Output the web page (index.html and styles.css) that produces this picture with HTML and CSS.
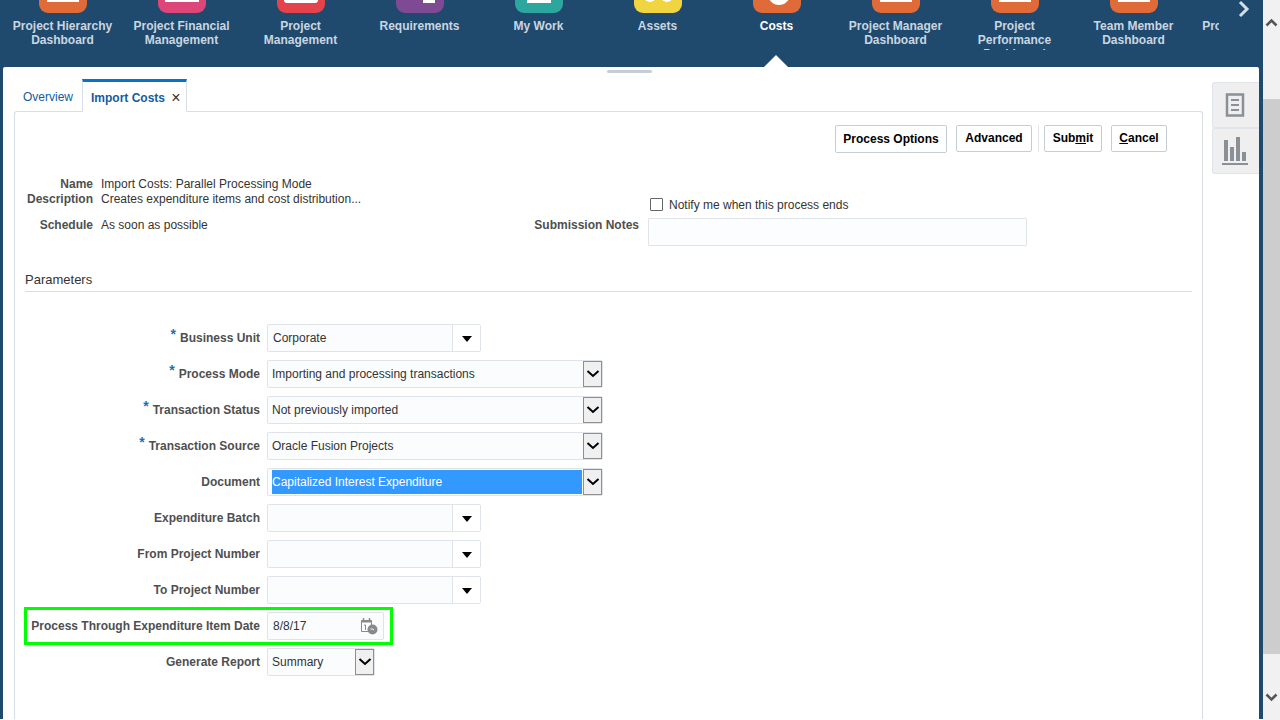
FILE: index.html
```html
<!DOCTYPE html>
<html lang="en">
<head>
  <meta charset="UTF-8">
  <title>Import Costs</title>
  <link rel="stylesheet" href="styles.css">
</head>
<body>
  <div class="app">
    <div class="nav">
      <div class="nav-items">
        <div class="nav-item"><div class="tile orange"><span class="peek peek-hier"></span></div><div class="nav-label">Project Hierarchy Dashboard</div></div>
        <div class="nav-item"><div class="tile pink"><span class="peek peek-fin"></span></div><div class="nav-label">Project Financial Management</div></div>
        <div class="nav-item"><div class="tile red"><span class="peek peek-mgmt"></span></div><div class="nav-label">Project Management</div></div>
        <div class="nav-item"><div class="tile purple"><span class="peek peek-req"></span></div><div class="nav-label">Requirements</div></div>
        <div class="nav-item"><div class="tile teal"><span class="peek peek-work"></span></div><div class="nav-label">My Work</div></div>
        <div class="nav-item"><div class="tile yellow"><span class="peek peek-dot1"></span><span class="peek peek-dot2"></span></div><div class="nav-label">Assets</div></div>
        <div class="nav-item active"><div class="tile orange"><span class="peek peek-coin"></span></div><div class="nav-label">Costs</div></div>
        <div class="nav-item"><div class="tile orange"><span class="peek peek-hier"></span></div><div class="nav-label">Project Manager Dashboard</div></div>
        <div class="nav-item"><div class="tile orange"><span class="peek peek-hier"></span></div><div class="nav-label">Project Performance Dashboard</div></div>
        <div class="nav-item"><div class="tile orange"><span class="peek peek-hier"></span></div><div class="nav-label">Team Member Dashboard</div></div>
        <div class="nav-item"><div class="tile orange"><span class="peek peek-hier"></span></div><div class="nav-label">Project Reporting</div></div>
      </div>
      <svg class="nav-next" width="14" height="18" viewBox="0 0 14 18"><path d="M3 2l7 7-7 7" fill="none" stroke="#d5dde5" stroke-width="3"/></svg>
      <div class="nav-pointer"></div>
    </div>

    <div class="panel">
      <div class="sash"></div>
      <div class="panel-main">
        <div class="tabs">
          <a class="tab">Overview</a>
          <a class="tab tab-on">Import Costs <span class="tab-close">×</span></a>
        </div>
        <div class="content">
          <div class="toolbar">
            <button class="btn btn-options">Process Options</button>
            <button class="btn btn-advanced">Advanced</button>
            <span class="tool-sep"></span>
            <button class="btn btn-submit">Sub<u>m</u>it</button>
            <button class="btn btn-cancel"><u>C</u>ancel</button>
          </div>

          <div class="summary">
            <div class="summary-left">
              <div class="info"><span class="info-label">Name</span><span>Import Costs: Parallel Processing Mode</span></div>
              <div class="info"><span class="info-label">Description</span><span>Creates expenditure items and cost distribution...</span></div>
              <div class="info info-gap"><span class="info-label">Schedule</span><span>As soon as possible</span></div>
            </div>
            <div class="summary-right">
              <label class="notify"><span class="check"></span><span class="notify-text">Notify me when this process ends</span></label>
              <div class="notes"><span class="notes-label">Submission Notes</span><div class="notes-box"></div></div>
            </div>
          </div>

          <h3 class="section">Parameters</h3>

          <div class="params">
            <div class="row"><label class="req">Business Unit</label><div class="field combo">Corporate<span class="combo-btn"><i class="down"></i></span></div></div>
            <div class="row"><label class="req">Process Mode</label><div class="field sel">Importing and processing transactions<span class="sel-btn"><svg width="14" height="8" viewBox="0 0 14 8"><path d="M1.500 1l5.500 5 5.500-5" fill="none" stroke="#000" stroke-width="2"/></svg></span></div></div>
            <div class="row"><label class="req">Transaction Status</label><div class="field sel">Not previously imported<span class="sel-btn"><svg width="14" height="8" viewBox="0 0 14 8"><path d="M1.500 1l5.500 5 5.500-5" fill="none" stroke="#000" stroke-width="2"/></svg></span></div></div>
            <div class="row"><label class="req">Transaction Source</label><div class="field sel">Oracle Fusion Projects<span class="sel-btn"><svg width="14" height="8" viewBox="0 0 14 8"><path d="M1.500 1l5.500 5 5.500-5" fill="none" stroke="#000" stroke-width="2"/></svg></span></div></div>
            <div class="row"><label>Document</label><div class="field sel"><span class="picked">Capitalized Interest Expenditure</span><span class="sel-btn"><svg width="14" height="8" viewBox="0 0 14 8"><path d="M1.500 1l5.500 5 5.500-5" fill="none" stroke="#000" stroke-width="2"/></svg></span></div></div>
            <div class="row"><label>Expenditure Batch</label><div class="field combo"><span class="combo-btn"><i class="down"></i></span></div></div>
            <div class="row"><label>From Project Number</label><div class="field combo"><span class="combo-btn"><i class="down"></i></span></div></div>
            <div class="row"><label>To Project Number</label><div class="field combo"><span class="combo-btn"><i class="down"></i></span></div></div>
            <div class="row"><label>Process Through Expenditure Item Date</label><div class="field date">8/8/17
              <svg class="cal" width="18" height="18" viewBox="0 0 18 18"><path d="M1.500 3.500h10v11h-10z" fill="#fff" stroke="#8a8a8a"/><path d="M1.500 3.500h10v2h-10z" fill="#8a8a8a"/><path d="M3.500 1v3M9.500 1v3" stroke="#8a8a8a" stroke-width="1.500"/><path d="M4 8h1.500v5" fill="none" stroke="#8a8a8a"/><circle cx="12.500" cy="12.500" r="5" fill="#8a8a8a"/><path d="M10.500 12h2l1.500 1" fill="none" stroke="#fff"/></svg>
            </div></div>
            <div class="row"><label>Generate Report</label><div class="field sel sel-short">Summary<span class="sel-btn"><svg width="14" height="8" viewBox="0 0 14 8"><path d="M1.500 1l5.500 5 5.500-5" fill="none" stroke="#000" stroke-width="2"/></svg></span></div></div>
            <div class="highlight"></div>
          </div>
        </div>
      </div>
      <div class="side-tabs">
        <div class="side-tab"><svg width="20" height="24" viewBox="0 0 20 24"><path d="M2 1.500h16v21H2z" fill="none" stroke="#8a9095" stroke-width="2.500"/><path d="M6 7h8M6 12h8M6 17h8" stroke="#8a9095" stroke-width="2"/></svg></div>
        <div class="side-tab"><svg width="26" height="28" viewBox="0 0 26 28"><path d="M2 3h4v21H2zM8 10h4v14H8zM14 0h4v24h-4zM20 15h4v9h-4zM0 26h26v2H0z" fill="#8a9095"/></svg></div>
      </div>
    </div>
  </div>

  <div class="scrollbar">
    <svg width="13" height="9" viewBox="0 0 13 9"><path d="M1.500 7.500l5-5 5 5" fill="none" stroke="#555" stroke-width="2.500"/></svg>
    <div class="thumb"></div>
    <svg width="13" height="9" viewBox="0 0 13 9"><path d="M1.500 1.500l5 5 5-5" fill="none" stroke="#555" stroke-width="2.500"/></svg>
  </div>
</body>
</html>
```

FILE: styles.css
```css
html, body {
  margin: 0;
  height: 720px;
  overflow: hidden;
}
body {
  display: flex;
  background: #fff;
  font-family: "Liberation Sans", Arial, sans-serif;
  font-size: 12px;
  color: #333;
}
.app {
  width: 1263px;
  height: 719px;
  background: #1f4a6e;
  display: flex;
  flex-direction: column;
}

/* top strip */
.nav {
  height: 67px;
  flex: none;
  position: relative;
  padding-left: 3px;
}
.nav-items {
  display: flex;
  width: 1216px;
  height: 50px;
  overflow: hidden;
}
.nav-item {
  flex: none;
  width: 119px;
  text-align: center;
  color: #c9d6e1;
  font-weight: bold;
  line-height: 14px;
}
.nav-item.active {
  color: #fff;
}
.nav-label {
  padding: 0 7px;
}
.tile {
  width: 48px;
  height: 48px;
  margin: -35px auto 6px;
  border-radius: 9px;
  position: relative;
  overflow: hidden;
}
.orange { background: #e06a38; }
.pink { background: #dc4678; }
.red { background: #e4434b; }
.purple { background: #7f4a94; }
.teal { background: #2ea6a0; }
.yellow { background: #f0d540; }
.peek {
  position: absolute;
  background: #fff;
  bottom: 10px;
}
.peek-hier { left: 8px; width: 32px; height: 6px; bottom: 11px; }
.peek-fin { left: 7px; width: 30px; height: 6px; bottom: 11px; background: none; border: 2px solid #fff; }
.peek-mgmt { left: 7px; width: 34px; height: 8px; border-radius: 0 0 3px 3px; }
.peek-req { left: 27px; width: 12px; height: 9px; }
.peek-work { left: 12px; width: 24px; height: 9px; }
.peek-dot1, .peek-dot2 { width: 12px; height: 12px; border-radius: 50%; bottom: 11px; }
.peek-dot1 { left: 10px; }
.peek-dot2 { left: 27px; }
.peek-coin { left: 15px; width: 22px; height: 22px; border-radius: 50%; bottom: 8px; }
.nav-next {
  position: absolute;
  left: 1237px;
  top: 0;
}
.nav-pointer {
  position: absolute;
  left: 764px;
  top: 55px;
  border-left: 12px solid transparent;
  border-right: 12px solid transparent;
  border-bottom: 12px solid #fff;
}

/* white panel */
.panel {
  flex: 1;
  margin: 0 4px 0 3px;
  background: #fff;
  border-radius: 2px 2px 0 0;
  display: flex;
  position: relative;
  overflow: hidden;
}
.sash {
  position: absolute;
  left: 604px;
  top: 3px;
  width: 45px;
  height: 3px;
  background: #c8ccd6;
  border-radius: 2px;
}
.panel-main {
  width: 1198px;
  margin-left: 11px;
  padding-top: 12px;
  flex: none;
  display: flex;
  flex-direction: column;
}
.tabs {
  display: flex;
  height: 32px;
  flex: none;
  padding-left: 1px;
}
.tab {
  padding: 11px 8px 0;
  color: #145c9e;
  line-height: 14px;
}
.tab-on {
  margin-left: 1px;
  width: 105px;
  box-sizing: border-box;
  border: 1px solid #d6dfe6;
  border-top: 3px solid #0572ce;
  border-bottom: 1px solid #fff;
  background: #fff;
  height: 33px;
  padding-top: 9px;
  font-weight: bold;
  white-space: nowrap;
  position: relative;
  z-index: 1;
}
.tab-close {
  font-weight: normal;
  font-size: 16px;
  line-height: 14px;
  color: #333;
  margin-left: 3px;
  vertical-align: -1px;
}
.content {
  flex: 1;
  box-sizing: border-box;
  width: 1189px;
  border: 1px solid #d6dfe6;
  border-bottom: 0;
  border-radius: 3px 3px 0 0;
  padding: 13px 10px 0;
}

/* buttons */
.toolbar {
  display: flex;
  justify-content: flex-end;
  align-items: flex-start;
  padding-right: 25px;
  height: 28px;
}
.btn {
  height: 27px;
  padding: 0 0 2px;
  margin-left: 9px;
  background: #fff;
  border: 1px solid #c4ced7;
  border-radius: 2px;
  font: bold 12px "Liberation Sans", Arial, sans-serif;
  color: #000;
}
.btn-options {
  width: 112px;
  height: 28px;
  padding-bottom: 1px;
}
.btn-advanced { width: 76px; }
.btn-submit { width: 58px; }
.btn-cancel { width: 56px; }
.tool-sep {
  width: 1px;
  height: 27px;
  background: #e2e6ea;
  margin: 0 -4px 0 6px;
}

/* name, description, notes */
.summary {
  display: flex;
  margin-top: 24px;
  height: 77px;
}
.summary-left {
  width: 500px;
  flex: none;
}
.info {
  display: flex;
  gap: 8px;
  line-height: 15px;
}
.info-label {
  width: 67px;
  margin-left: 1px;
  text-align: right;
  font-weight: bold;
  color: #4f4f4f;
}
.info-gap {
  margin-top: 11px;
}
.summary-right {
  padding-top: 19px;
}
.notify {
  display: flex;
  align-items: center;
  margin-left: 125px;
  height: 16px;
}
.notify-text {
  padding-top: 1px;
}
.check {
  width: 11px;
  height: 11px;
  border: 1px solid #666;
  border-radius: 1px;
  margin-right: 6px;
  background: #fff;
}
.notes {
  display: flex;
  margin-top: 6px;
}
.notes-label {
  width: 114px;
  margin-right: 9px;
  text-align: right;
  font-weight: bold;
  color: #4f4f4f;
  line-height: 14px;
}
.notes-box {
  width: 377px;
  height: 26px;
  border: 1px solid #dfe4ea;
  background: #fcfdfe;
  border-radius: 1px;
}
.section {
  margin: 18px 0 0;
  font-size: 13px;
  font-weight: normal;
  line-height: 15px;
  height: 18px;
  padding-bottom: 1px;
  box-sizing: content-box;
  color: #333;
  border-bottom: 1px solid #d6dfe6;
  width: 1167px;
}

/* parameter rows */
.params {
  position: relative;
  margin-top: 32px;
}
.row {
  display: flex;
  align-items: center;
  height: 28px;
  margin-bottom: 8px;
}
.row label {
  width: 235px;
  margin-right: 7px;
  text-align: right;
  font-weight: bold;
  color: #4f4f4f;
  white-space: nowrap;
}
.req::before {
  content: "*";
  color: #1f6fb8;
  font-size: 14px;
  line-height: 0;
  margin-right: 4px;
  vertical-align: 3px;
}
.field {
  box-sizing: border-box;
  height: 28px;
  border: 1px solid #dfe4ea;
  border-radius: 2px;
  background: #fbfcfe;
  line-height: 26px;
  color: #333;
  display: flex;
  align-items: center;
  position: relative;
  flex: none;
}
.combo {
  width: 214px;
  padding-left: 5px;
}
.combo-btn {
  position: absolute;
  right: 0;
  top: 0;
  box-sizing: border-box;
  width: 28px;
  height: 26px;
  border-left: 1px solid #dfe4ea;
  background: #fff;
  display: flex;
  align-items: center;
  justify-content: center;
}
.down {
  border-left: 5px solid transparent;
  border-right: 5px solid transparent;
  border-top: 6px solid #000;
  margin-top: 1px;
}
.sel {
  width: 336px;
  padding-left: 4px;
}
.sel-short {
  width: 108px;
}
.sel-btn {
  position: absolute;
  right: 0;
  top: 0;
  box-sizing: border-box;
  width: 19px;
  height: 26px;
  border: 1px solid #8f8f8f;
  background: #f0f0f0;
  display: flex;
  align-items: center;
  justify-content: center;
}
.picked {
  background: #3399ff;
  color: #fff;
  width: 310px;
  height: 24px;
  line-height: 24px;
}
.date {
  width: 117px;
  padding-left: 5px;
}
.cal {
  position: absolute;
  right: 5px;
  top: 4px;
}
.highlight {
  position: absolute;
  left: -1px;
  top: 283px;
  width: 363px;
  height: 32px;
  border: 3px solid #00ff00;
}

/* side tabs */
.side-tabs {
  flex: 1;
  padding-top: 15px;
}
.side-tab {
  box-sizing: border-box;
  width: 47px;
  height: 46px;
  padding-right: 2px;
  background: #efefef;
  border: 1px solid #dfe4ea;
  border-right: 0;
  border-radius: 3px 0 0 3px;
  display: flex;
  align-items: center;
  justify-content: center;
}

/* browser scrollbar */
.scrollbar {
  width: 17px;
  height: 720px;
  background: #f1f1f1;
  display: flex;
  flex-direction: column;
  align-items: center;
}
.scrollbar svg:first-child {
  margin-top: 18px;
}
.thumb {
  width: 17px;
  height: 555px;
  margin: 72px 0 39px;
  background: #cdcdcd;
}
```
